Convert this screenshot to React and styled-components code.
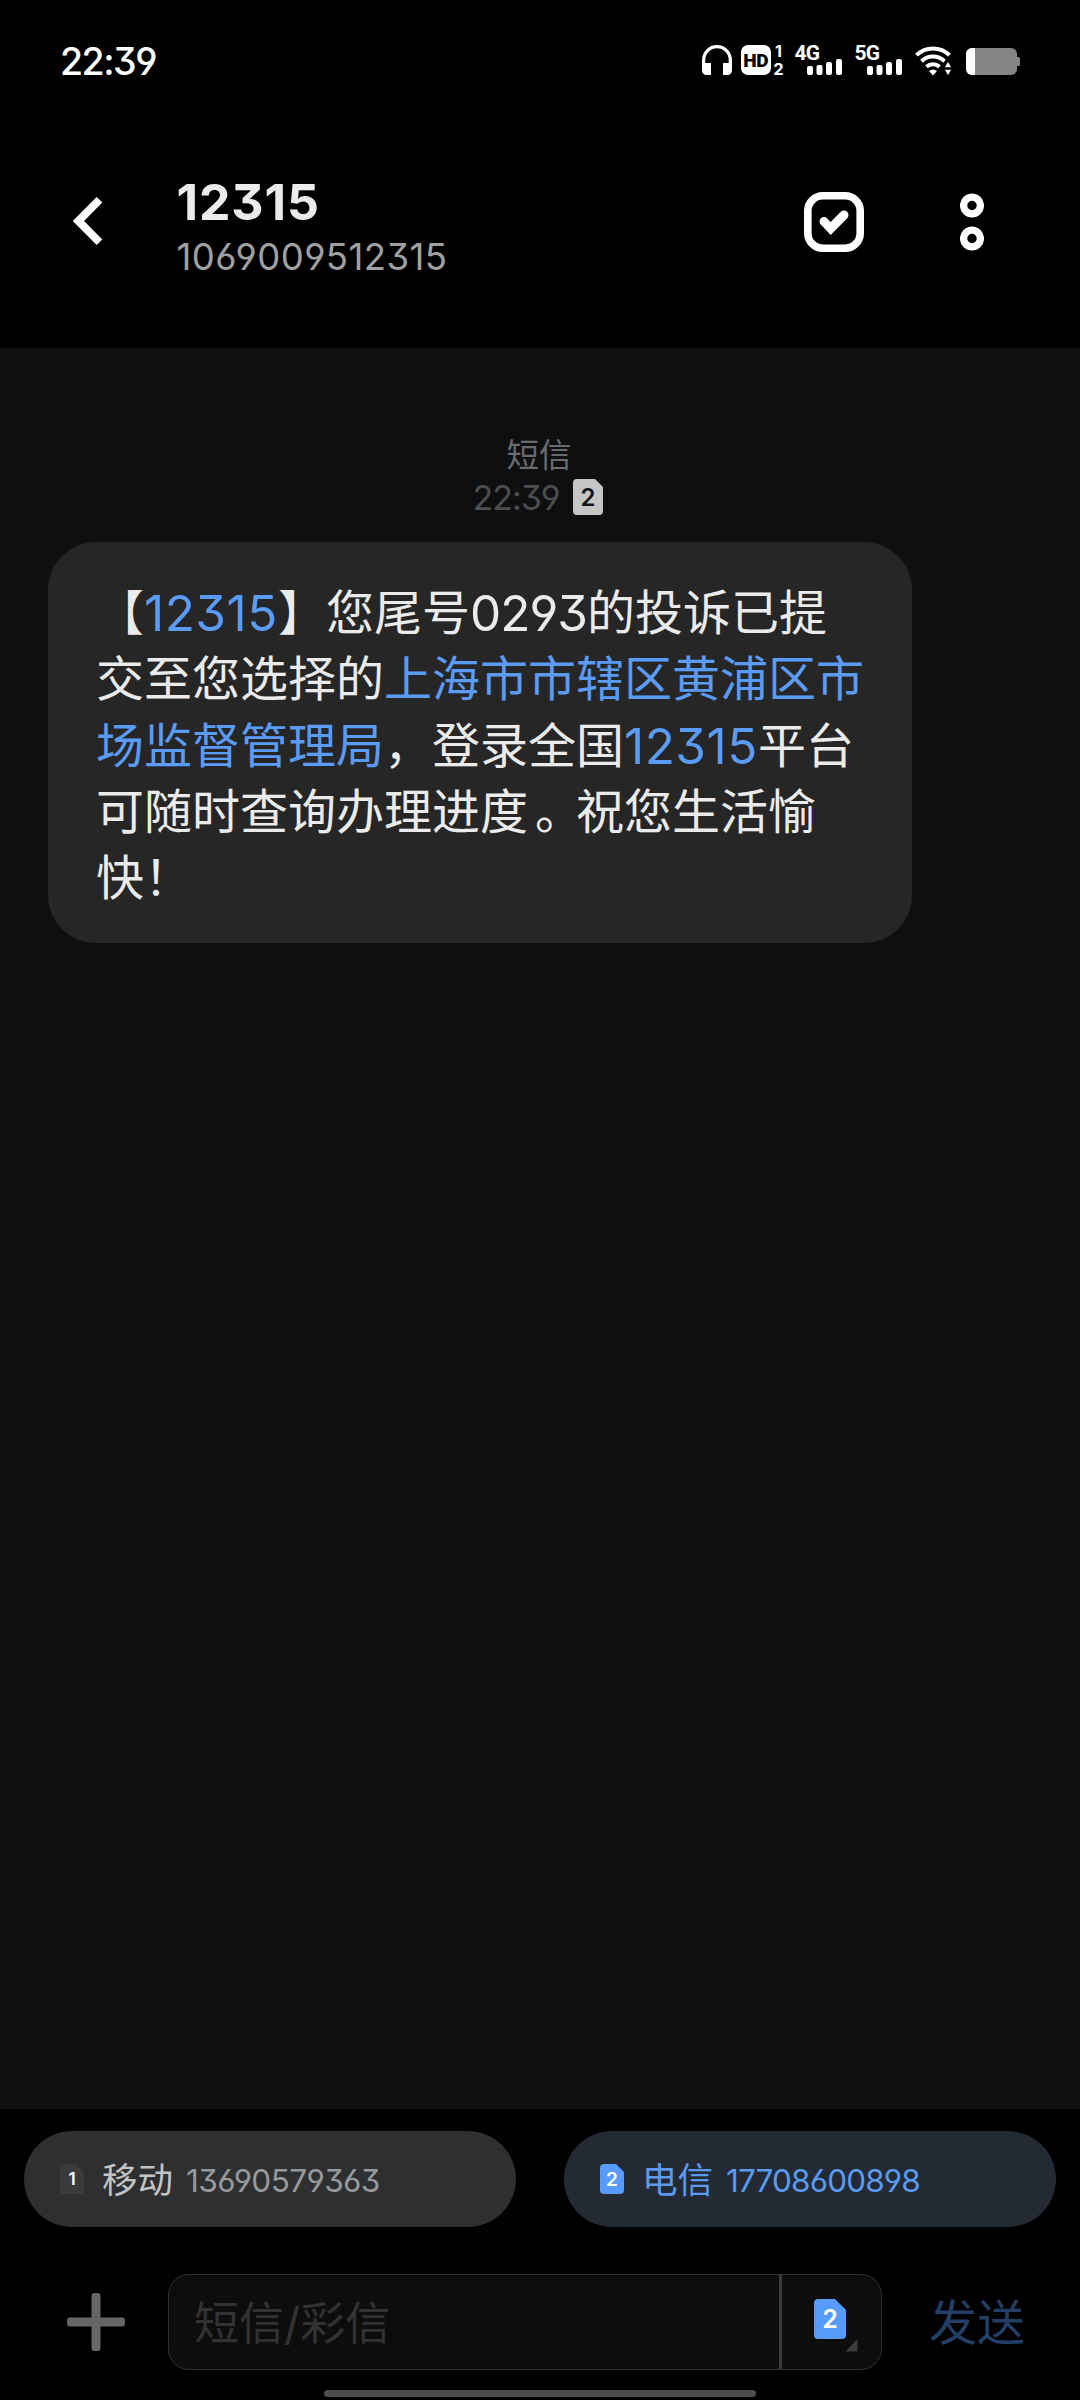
import React from 'react';
import styled, { createGlobalStyle } from 'styled-components';

const GlobalStyle = createGlobalStyle`
  * { box-sizing: border-box; }
  html, body { margin: 0; padding: 0; background: #000; }
  body {
    font-family: Inter, "Noto Sans CJK SC", sans-serif;
    font-feature-settings: "ss01", "calt" 0;
    -webkit-font-smoothing: antialiased;
  }
`;

const Screen = styled.main`
  width: 1080px;
  height: 2400px;
  display: flex;
  flex-direction: column;
  background: #000;
  overflow: hidden;
`;

const StatusBar = styled.div`
  height: 120px;
  padding: 0 60px 0 60px;
  display: flex;
  align-items: center;
  justify-content: space-between;
`;

const Digits = styled.span`
  font-size: ${(p) => p.$size}px;
  letter-spacing: ${(p) => p.$track || 0}px;
  font-weight: ${(p) => p.$weight || 400};
  color: ${(p) => p.$color || 'inherit'};
  line-height: ${(p) => (p.$line ? `${p.$line}px` : 'inherit')};
  white-space: nowrap;
`;

const Clock = styled(Digits)`
  padding-top: 3px;
`;

const StatusIcons = styled.svg`
  width: 318px;
  height: 30px;
  display: block;
  overflow: visible;
`;

const Header = styled.header`
  height: 228px;
  padding: 0 96px 26px 73px;
  display: flex;
  align-items: center;
`;

const IconButton = styled.button`
  border: 0;
  padding: 0;
  background: none;
  display: flex;
  flex: none;
  margin-left: ${(p) => p.$gap || 0}px;
  margin-top: ${(p) => p.$drop || 0}px;
`;

const Titles = styled.div`
  flex: 1;
  margin: 13px 0 0 73.5px;
  display: flex;
  flex-direction: column;
`;

const Chat = styled.section`
  flex: 1;
  background: #0e0f11;
  padding-top: 86px;
  display: flex;
  flex-direction: column;
`;

const Kind = styled.div`
  height: 42px;
  line-height: 43px;
  font-size: 32.5px;
  color: #6b6b6c;
  text-align: center;
  padding-right: 2px;
`;

const Stamp = styled.div`
  height: 44px;
  display: flex;
  justify-content: center;
  align-items: center;
  gap: 13px;
  padding-right: 5px;

  svg { margin-bottom: 3px; }
`;

const Bubble = styled.article`
  width: 864px;
  height: 401px;
  margin: 22px 0 0 48px;
  padding: 38px 48px 0;
  border-radius: 48px;
  background: #262626;
  color: #ebebeb;
  font-size: 48px;
`;

const Line = styled.div`
  height: 66.3px;
  line-height: 66.3px;
  display: flex;
  white-space: nowrap;
`;

const Link = styled.span`
  color: #5a9bf6;
`;

const Num = styled.span`
  width: ${(p) => p.$w}px;
  font-size: 49.5px;
  letter-spacing: ${(p) => (p.$link ? 0.5 : -1)}px;
  color: ${(p) => (p.$link ? '#5a9bf6' : 'inherit')};
`;

const Stop = styled.span`
  width: 48px;
  padding-left: 7px;
  font-feature-settings: "halt";
`;

const Panel = styled.footer`
  height: 291px;
  padding-top: 22px;
  display: flex;
  flex-direction: column;
`;

const SimRow = styled.div`
  display: grid;
  grid-template-columns: 1fr 1fr;
  gap: 48px;
  padding: 0 24px;
`;

const SimChip = styled.button`
  height: 96px;
  border: 0;
  border-radius: 48px;
  padding: 0 36px;
  display: flex;
  align-items: center;
  font-family: inherit;
  font-feature-settings: inherit;
  background: ${(p) => (p.$active ? '#242a34' : '#2e2f31')};
  color: ${(p) => (p.$active ? '#5a9bf0' : '#c4c4c5')};
`;

const Carrier = styled.span`
  font-size: 35.5px;
  line-height: 48px;
  margin: 4px 13px 0 18px;
`;

const ChipNumber = styled(Digits)`
  margin-top: 3px;
`;

const Compose = styled.div`
  height: 96px;
  margin-top: 47px;
  padding-left: 67px;
  display: flex;
  align-items: center;
`;

const Field = styled.div`
  width: 714px;
  height: 96px;
  margin-left: 43px;
  border: 1px solid #303030;
  border-radius: 21px;
  background: #0d0d0d;
  display: flex;
`;

const Placeholder = styled.span`
  flex: 1;
  padding-left: 25px;
  font-size: 45px;
  line-height: 97px;
  color: #323232;
`;

const SimPick = styled.div`
  width: 102px;
  border-left: 3px solid #3a3a3a;
  padding: 24px 0 0 32px;
`;

const Send = styled.span`
  margin-left: 47px;
  font-size: 48px;
  line-height: 96px;
  padding-top: 2px;
  color: #243f66;
`;

const HomeBar = styled.div`
  width: 432px;
  height: 7px;
  margin: 20px auto 0;
  border-radius: 4px;
  background: #4d4d4d;
`;

function SimIcon({ n, w, h, fill, ink, size, cut = 7 }) {
  return (
    <svg width={w} height={h} viewBox={`0 0 ${w} ${h}`} style={{ flex: 'none', display: 'block' }}>
      <path
        d={`M4 0H${w - cut - 1}L${w} ${cut + 1}V${h - 4}a4 4 0 0 1-4 4H4a4 4 0 0 1-4-4V4a4 4 0 0 1 4-4Z`}
        fill={fill}
      />
      <text x={w / 2} y={h / 2 + size * 0.364} fontSize={size} fontWeight="600" textAnchor="middle" fill={ink}>
        {n}
      </text>
    </svg>
  );
}

function Signal({ x, label }) {
  return (
    <g transform={`translate(${x} 0)`}>
      <text x="-0.5" y="15" fontFamily="Roboto" fontSize="21" fontWeight="700" letterSpacing="-0.8" fill="#fff">
        {label}
      </text>
      <rect x="12" y="21" width="6" height="9" rx="2" />
      <rect x="21.5" y="20" width="6" height="10" rx="2" />
      <rect x="31" y="17" width="6" height="13" rx="2" />
      <rect x="41" y="14" width="6" height="16" rx="2" />
    </g>
  );
}

function StatusGlyphs() {
  return (
    <StatusIcons viewBox="0 0 318 30" fill="#fff">
      <path d="M0 15a15 15 0 0 1 30 0v10.500a4.500 4.500 0 0 1-4.500 4.500H21V18h5.700v-3a11.700 11.700 0 0 0-23.400 0v3H9v12H4.500A4.500 4.500 0 0 1 0 25.500Z" />
      <rect x="39" width="30" height="30" rx="7" />
      <text x="53.7" y="22" fontFamily="Roboto" fontSize="19" fontWeight="900" textAnchor="middle" letterSpacing="-0.5" fill="#000">HD</text>
      <text x="76.500" y="12" fontSize="16" fontWeight="700" textAnchor="middle">1</text>
      <text x="76.500" y="30" fontSize="16.500" fontWeight="700" textAnchor="middle">2</text>
      <Signal x={93} label="4G" />
      <Signal x={153} label="5G" />
      <g fill="none" stroke="#fff" strokeWidth="4">
        <path d="M214.500 10.200a23.500 23.500 0 0 1 33 0" />
        <path d="M219.500 16.200a16.500 16.500 0 0 1 23 0" />
        <path d="M224.500 21.800a9.500 9.500 0 0 1 13 0" />
      </g>
      <path d="M227 26q4-3 8 0l-4 4.500Z" />
      <path d="M242.500 22.500l3.500-6 3.500 6ZM242.500 24.500h7l-3.500 6Z" stroke="#000" strokeWidth="0.500" />
      <rect x="264" y="3" width="51" height="27" rx="6" fill="#858585" />
      <path d="M315 12h1.500a1.500 1.500 0 0 1 1.500 1.500v6a1.500 1.500 0 0 1-1.500 1.500H315Z" fill="#858585" />
      <path d="M273 3v27h-3a6 6 0 0 1-6-6V9a6 6 0 0 1 6-6Z" />
    </StatusIcons>
  );
}

export default function App() {
  return (
    <Screen>
      <GlobalStyle />
      <StatusBar>
        <Clock $size={37.5} $track={-1.5} $weight={500} $color="#fff">22:39</Clock>
        <StatusGlyphs />
      </StatusBar>

      <Header>
        <IconButton aria-label="返回">
          <svg width="30" height="48" viewBox="0 0 30 48" fill="none" stroke="#fff" strokeWidth="8">
            <path d="M26.500 2.800L5.500 24l21 21.200" />
          </svg>
        </IconButton>
        <Titles>
          <Digits $size={50} $weight={700} $line={58} $track={0.9} $color="#ebebeb">12315</Digits>
          <Digits $size={36.5} $line={52} $track={0.45} $color="#a0a0a0">1069009512315</Digits>
        </Titles>
        <IconButton $drop={2} aria-label="选择">
          <svg width="60" height="60" viewBox="0 0 60 60" fill="none" stroke="#fff">
            <rect x="3.800" y="3.800" width="52.400" height="52.400" rx="15" strokeWidth="7.600" />
            <path d="M20 29.500l6.700 7L40 23" strokeWidth="9" strokeLinecap="round" />
          </svg>
        </IconButton>
        <IconButton $gap={96} $drop={2} aria-label="更多">
          <svg width="24" height="58" viewBox="0 0 24 58" fill="none" stroke="#fff" strokeWidth="7.300">
            <circle cx="12" cy="12.500" r="8.400" />
            <circle cx="12" cy="45.500" r="8.400" />
          </svg>
        </IconButton>
      </Header>

      <Chat>
        <Kind>短信</Kind>
        <Stamp>
          <Digits $size={34} $line={44} $track={-1} $color="#4d4d4e">22:39</Digits>
          <SimIcon n="2" w={30} h={36} fill="#c6c6c6" ink="#151515" size={24} />
        </Stamp>
        <Bubble>
          <Line>
            <span>【</span><Num $link $w={134}>12315</Num><span>】您尾号</span><Num $w={117}>0293</Num><span>的投诉已提</span>
          </Line>
          <Line>
            <span>交至您选择的</span><Link>上海市市辖区黄浦区市</Link>
          </Line>
          <Line>
            <Link>场监督管理局</Link><span>，登录全国</span><Num $link $w={134}>12315</Num><span>平台</span>
          </Line>
          <Line>
            <span>可随时查询办理进度</span><Stop>。</Stop><span>祝您生活愉</span>
          </Line>
          <Line>
            <span>快！</span>
          </Line>
        </Bubble>
      </Chat>

      <Panel>
        <SimRow>
          <SimChip>
            <SimIcon n="1" w={24} h={30} fill="#3b3b3b" ink="#fff" size={17} />
            <Carrier>移动</Carrier>
            <ChipNumber $size={31.5} $line={48} $track={-0.6} $color="#98999a">13690579363</ChipNumber>
          </SimChip>
          <SimChip $active>
            <SimIcon n="2" w={24} h={30} fill="#589bfa" ink="#fff" size={19} />
            <Carrier>电信</Carrier>
            <ChipNumber $size={31.5} $line={48} $track={-0.85}>17708600898</ChipNumber>
          </SimChip>
        </SimRow>
        <Compose>
          <IconButton aria-label="添加">
            <svg width="58" height="58" viewBox="0 0 58 58" fill="#666">
              <rect y="24.500" width="58" height="9" rx="3" />
              <rect x="24.500" width="9" height="58" rx="3" />
            </svg>
          </IconButton>
          <Field>
            <Placeholder>短信/彩信</Placeholder>
            <SimPick>
              <SimIcon n="2" w={32} h={40} fill="#589bfa" ink="#fff" size={25} cut={10} />
              <svg width="44" height="13" viewBox="0 0 44 13" style={{ display: 'block' }}>
                <path d="M43.500 0v12.500H31.500Z" fill="#3d3d3d" />
              </svg>
            </SimPick>
          </Field>
          <Send>发送</Send>
        </Compose>
        <HomeBar />
      </Panel>
    </Screen>
  );
}
